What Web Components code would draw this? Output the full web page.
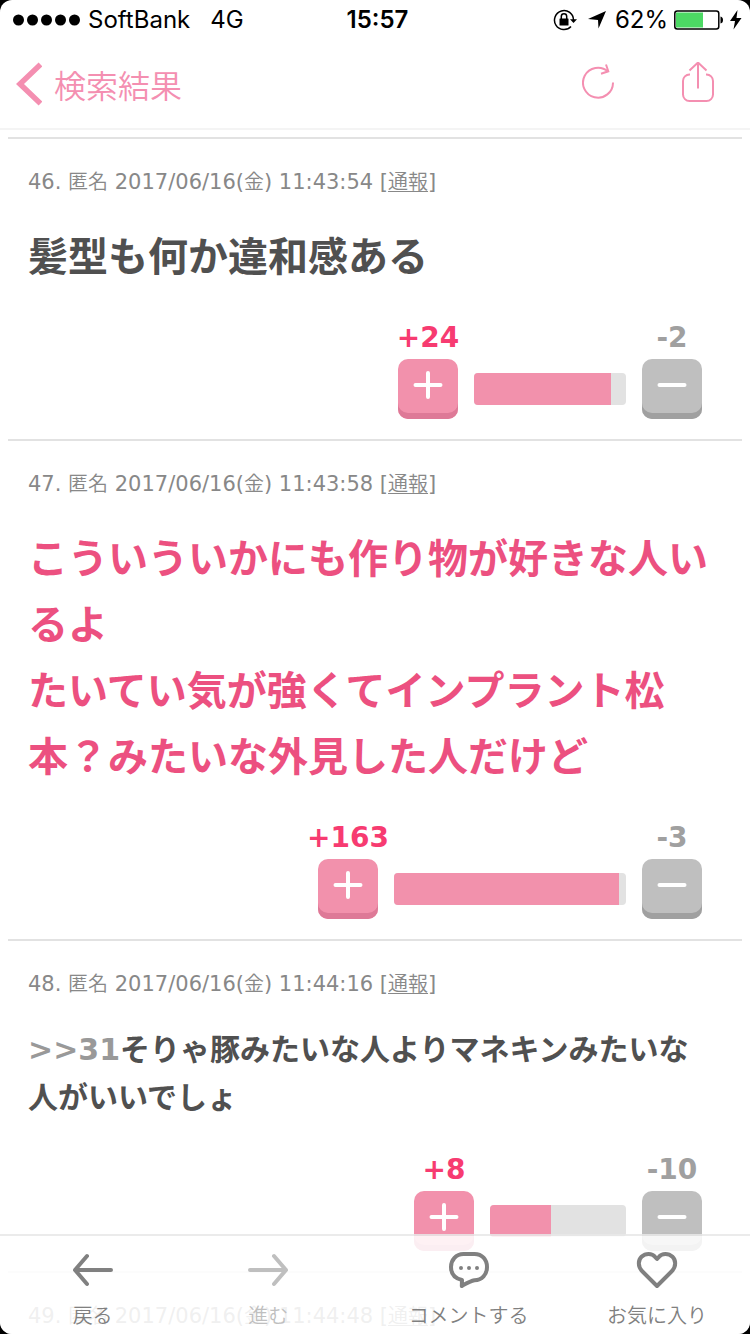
<!DOCTYPE html>
<html lang="ja">
<head>
<meta charset="UTF-8">
<meta name="viewport" content="width=device-width, initial-scale=1">
<title>検索結果</title>
<style>
    body {
        margin: 0;
        background: #000;
        font-family: "DejaVu Sans", "Noto Sans CJK JP", sans-serif;
        color: #505050;
    }
</style>
</head>
<body>

<topic-page>
    <comment-item numero="46" nome="匿名" data="2017/06/16" dia="金" hora="11:43:54"
        mais="24" menos="2" largura="152" parte="90">髪型も何か違和感ある</comment-item>

    <comment-item class="popular" numero="47" nome="匿名" data="2017/06/16" dia="金" hora="11:43:58"
        mais="163" menos="3" largura="232" parte="97">こういういかにも作り物が好きな人いるよ<br>たいてい気が強くてインプラント松本？みたいな外見した人だけど</comment-item>

    <comment-item class="small" numero="48" nome="匿名" data="2017/06/16" dia="金" hora="11:44:16"
        mais="8" menos="10" largura="136" parte="45"><a href="#31">&gt;&gt;31</a>そりゃ豚みたいな人よりマネキンみたいな人がいいでしょ</comment-item>

    <comment-item numero="49" nome="匿名" data="2017/06/16" dia="金" hora="11:44:48"></comment-item>
</topic-page>

<script>
class StatusBar extends HTMLElement {

    constructor() {
        super();
        this.attachShadow({ mode: "open" });
    }

    connectedCallback() {

        this.shadowRoot.innerHTML = `
        <style>

            :host {
                display: grid;
                grid-template-columns: 1fr auto 1fr;
                align-items: center;
                height: 40px;
                padding: 0 8px 0 13px;
                color: #000;
                font: 24px/40px Inter, "Liberation Sans", sans-serif;
            }

            .lado {
                display: flex;
                align-items: center;
            }

            .sinal {
                margin-right: 8px;
            }

            .rede {
                margin-left: 20px;
            }

            .direita {
                justify-content: flex-end;
            }

            .seta {
                margin: 0 9px 0 11px;
            }

            .bateria {
                margin: 0 6px;
            }

            b {
                font-weight: 600;
            }

        </style>

        <div class="lado">
            <svg class="sinal" width="67" height="12" viewBox="0 0 67 12">
                <circle cx="5.5" cy="6" r="5.5"/>
                <circle cx="19.5" cy="6" r="5.5"/>
                <circle cx="33.5" cy="6" r="5.5"/>
                <circle cx="47.5" cy="6" r="5.5"/>
                <circle cx="61.5" cy="6" r="5.5"/>
            </svg>
            <span>SoftBank</span>
            <span class="rede">4G</span>
        </div>

        <b>15:57</b>

        <div class="lado direita">
            <svg width="24" height="22" viewBox="0 0 24 22">
                <path d="M20.5 11A9.5 9.5 0 1 0 18 17.5" fill="none" stroke="#000" stroke-width="1.5"/>
                <path d="M17 10.3h7L20.5 14z"/>
                <rect x="6.5" y="9.5" width="9" height="7" rx="0.5"/>
                <path d="M8.3 10V7.5a2.7 2.7 0 0 1 5.4 0V10" fill="none" stroke="#000" stroke-width="1.5"/>
            </svg>
            <svg class="seta" width="18" height="18" viewBox="0 0 18 18">
                <path d="M18 0 10.5 17.5 10 9 0 8z"/>
            </svg>
            <span>62%</span>
            <svg class="bateria" width="50" height="20" viewBox="0 0 50 20">
                <rect x="0.8" y="1" width="44" height="18" rx="2.5" fill="none" stroke="#000" stroke-width="1.5"/>
                <rect x="2" y="2.5" width="27" height="15" fill="#4cd964"/>
                <path d="M46.5 6.5q2.5.5 2.5 3.5t-2.5 3.5z"/>
            </svg>
            <svg width="12" height="20" viewBox="0 0 12 20">
                <path d="M7.5 0 0 11h5L3.5 19.5 11.5 8h-5z"/>
            </svg>
        </div>
        `;
    }
}

customElements.define("status-bar", StatusBar);


class NavHeader extends HTMLElement {

    constructor() {
        super();
        this.attachShadow({ mode: "open" });
    }

    connectedCallback() {

        this.shadowRoot.innerHTML = `
        <style>

            :host {
                display: flex;
                align-items: center;
                justify-content: space-between;
                height: 88px;
                padding: 0 36px 0 16px;
                border-bottom: 2px solid #f4f4f4;
                color: #f48fb1;
            }

            a {
                display: flex;
                align-items: center;
                gap: 12px;
                color: inherit;
                text-decoration: none;
                font: 350 32px/46px "Noto Sans CJK JP", sans-serif;
            }

            .acoes {
                display: flex;
                align-items: center;
                gap: 68px;
            }

            button {
                display: block;
                padding: 0;
                border: 0;
                background: none;
                color: inherit;
            }

            svg {
                display: block;
                fill: none;
                stroke: currentColor;
            }

        </style>

        <a href="#voltar">
            <svg width="26" height="44" viewBox="0 0 26 44">
                <path d="M24.5 2.5 4 22l20.5 19.5" stroke-width="5.5"/>
            </svg>
            <span><slot></slot></span>
        </a>

        <div class="acoes">
            <button type="button" aria-label="更新">
                <svg width="32" height="44" viewBox="0 2 32 44" stroke-width="2">
                    <path d="M31 22.5A15 15 0 1 1 26 11.5"/>
                    <path d="M24 4.5 26.3 11.3 19 13.8"/>
                </svg>
            </button>
            <button type="button" aria-label="共有">
                <svg width="32" height="44" viewBox="0 2 32 44" stroke-width="2">
                    <path d="M8 14.5H7.5A6.5 6.5 0 0 0 1 21V34.5A6.5 6.5 0 0 0 7.5 41H24.5A6.5 6.5 0 0 0 31 34.5V21A6.5 6.5 0 0 0 24.5 14.5H24"/>
                    <path d="M16 28.5V2.5M7.5 10.5 16 2.5 24.5 10.5"/>
                </svg>
            </button>
        </div>
        `;
    }
}

customElements.define("nav-header", NavHeader);


class VoteBar extends HTMLElement {

    constructor() {
        super();
        this.attachShadow({ mode: "open" });
    }

    connectedCallback() {

        const mais = this.getAttribute("mais");
        const menos = this.getAttribute("menos");

        this.shadowRoot.innerHTML = `
        <style>

            :host {
                display: flex;
                justify-content: flex-end;
                align-items: flex-end;
                gap: 16px;
            }

            .voto {
                display: flex;
                flex-direction: column;
                align-items: center;
                gap: 6px;
                width: 60px;
                font: bold 28px/30px "DejaVu Sans", sans-serif;
                white-space: nowrap;
                color: #f73b71;
            }

            .menos {
                color: #a0a0a0;
            }

            button {
                width: 60px;
                height: 60px;
                padding: 0 0 8px;
                border: 0;
                border-radius: 10px;
                background: #f291ac;
                box-shadow: inset 0 -6px #de7997;
                display: flex;
                align-items: center;
                justify-content: center;
            }

            .menos button {
                background: #bfbfbf;
                box-shadow: inset 0 -6px #a0a0a0;
            }

            svg {
                stroke: #fff;
                stroke-width: 4;
                stroke-linecap: round;
            }

            .barra {
                height: 32px;
                margin-bottom: 14px;
                border-radius: 4px;
                background: #e2e2e2;
                overflow: hidden;
            }

            .parte {
                height: 100%;
                background: #f291ac;
            }

        </style>

        <div class="voto">
            <span>+${mais}</span>
            <button type="button" aria-label="プラス">
                <svg width="30" height="30" viewBox="0 0 30 30">
                    <path d="M2.5 15h25M15 3v24"/>
                </svg>
            </button>
        </div>

        <div class="barra" style="width: ${this.getAttribute("largura")}px">
            <div class="parte" style="width: ${this.getAttribute("parte")}%"></div>
        </div>

        <div class="voto menos">
            <span>-${menos}</span>
            <button type="button" aria-label="マイナス">
                <svg width="30" height="30" viewBox="0 0 30 30">
                    <path d="M2.5 15h25"/>
                </svg>
            </button>
        </div>
        `;
    }
}

customElements.define("vote-bar", VoteBar);


class CommentItem extends HTMLElement {

    constructor() {
        super();
        this.attachShadow({ mode: "open" });
    }

    connectedCallback() {

        const a = (nome) => this.getAttribute(nome);

        this.shadowRoot.innerHTML = `
        <style>

            :host {
                display: block;
                padding: 28px 24px 20px 20px;
                border-top: 2px solid #e2e2e2;
            }

            .info {
                font-size: 21px;
                line-height: 30px;
                color: #888;
            }

            .jp {
                font: 350 20px/20px "Noto Sans CJK JP", sans-serif;
            }

            .info a {
                color: inherit;
                text-decoration-thickness: 1px;
                text-underline-offset: 2px;
            }

            .texto {
                margin: 27px 0 33px;
                font-size: 40px;
                line-height: 66px;
                font-weight: bold;
            }

            :host(.popular) .texto {
                color: #ec5080;
            }

            :host(.small) .texto {
                font-size: 30px;
                line-height: 48px;
            }

            ::slotted(a) {
                color: #999;
                text-decoration: none;
            }

            vote-bar {
                margin-right: 16px;
            }

        </style>

        <article>
            <div class="info">${a("numero")}. <span class="jp">${a("nome")}</span> ${a("data")}(<span class="jp">${a("dia")}</span>) ${a("hora")} [<a class="jp" href="#report">通報</a>]</div>
            <div class="texto"><slot></slot></div>
            ${a("mais") ? `<vote-bar mais="${a("mais")}" menos="${a("menos")}" largura="${a("largura")}" parte="${a("parte")}"></vote-bar>` : ""}
        </article>
        `;
    }
}

customElements.define("comment-item", CommentItem);


class ToolBar extends HTMLElement {

    constructor() {
        super();
        this.attachShadow({ mode: "open" });
    }

    connectedCallback() {

        this.shadowRoot.innerHTML = `
        <style>

            :host {
                display: grid;
                grid-template-columns: 185fr 166fr 234fr 142fr;
                padding: 12px 22px 4px 0;
                border-top: 2px solid rgba(232, 232, 232, 0.85);
                background: rgba(255, 255, 255, 0.87);
                background-clip: padding-box;
            }

            button {
                display: flex;
                flex-direction: column;
                align-items: center;
                gap: 8px;
                padding: 0;
                border: 0;
                background: none;
                color: #808080;
                font: 350 20px/30px "Noto Sans CJK JP", sans-serif;
                white-space: nowrap;
            }

            button:disabled {
                color: #bfbfbf;
            }

            svg {
                fill: none;
                stroke: currentColor;
                stroke-width: 4;
                stroke-linecap: round;
                stroke-linejoin: round;
            }

        </style>

        <button type="button">
            <svg width="44" height="44" viewBox="0 0 44 44">
                <path d="M40 22H4M16 8 4 22l12 14"/>
            </svg>
            戻る
        </button>

        <button type="button" disabled>
            <svg width="44" height="44" viewBox="0 0 44 44">
                <path d="M4 22h36M28 8l12 14-12 14"/>
            </svg>
            進む
        </button>

        <button type="button">
            <svg width="44" height="44" viewBox="0 0 44 44">
                <path d="M16.5 6h11C35 6 40 11.5 40 19s-5 13-12.5 13.3Q24 33 15.5 37.5L14.8 38 15 32C8 30.5 4 26 4 19S9 6 16.5 6z"/>
                <path d="M14 20h0M22 20h0M30 20h0"/>
            </svg>
            コメントする
        </button>

        <button type="button">
            <svg width="44" height="44" viewBox="0 0 44 44">
                <path d="M22 38 7 23C2.5 18 3.2 12 6.5 8.8 10.5 5 17 5 20 8.8L22 11l2-2.2C27 5 33.5 5 37.5 8.8 40.8 12 41.5 18 37 23z"/>
            </svg>
            お気に入り
        </button>
        `;
    }
}

customElements.define("tool-bar", ToolBar);


class TopicPage extends HTMLElement {

    constructor() {
        super();
        this.attachShadow({ mode: "open" });
    }

    connectedCallback() {

        this.shadowRoot.innerHTML = `
        <style>

            :host {
                display: flex;
                flex-direction: column;
                position: relative;
                height: 100vh;
                border-radius: 12px;
                background: #fff;
                overflow: hidden;
            }

            main {
                flex: 1;
                min-height: 0;
                padding: 7px 8px 0;
                overflow: hidden;
            }

            /* fica por cima da lista */
            tool-bar {
                position: absolute;
                left: 0;
                right: 0;
                bottom: 0;
            }

        </style>

        <status-bar></status-bar>
        <nav-header>検索結果</nav-header>
        <main><slot></slot></main>
        <tool-bar></tool-bar>
        `;
    }
}

customElements.define("topic-page", TopicPage);
</script>

</body>
</html>
